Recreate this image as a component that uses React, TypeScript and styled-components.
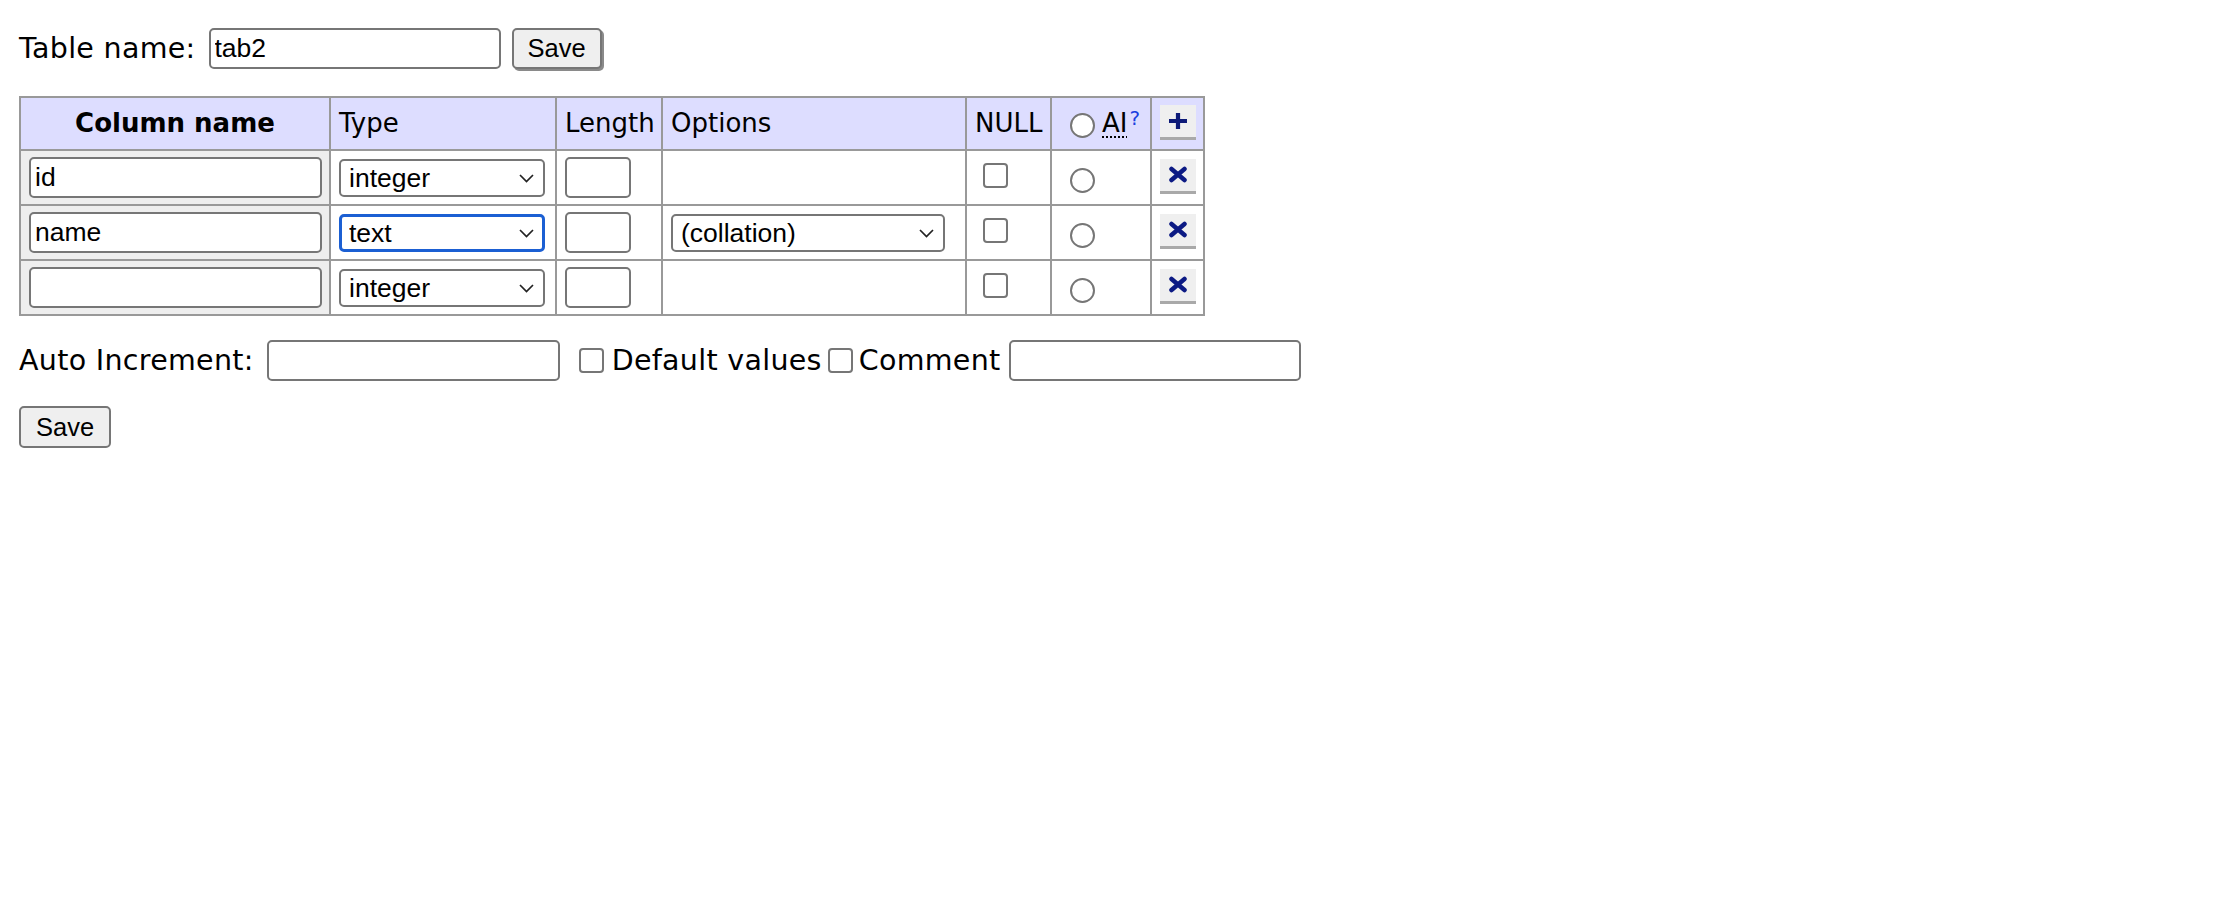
import React from "react";
import styled, { createGlobalStyle, css } from "styled-components";

const Global = createGlobalStyle`
  html, body { margin: 0; padding: 0; background: #fff; }
  body { font-family: "DejaVu Sans", Verdana, sans-serif; font-size: 28px; color: #000; }
`;

const Page = styled.div`
  padding: 27px 20px 0 19px;
  font-family: "DejaVu Sans", Verdana, sans-serif;
  font-size: 28.5px;
  letter-spacing: 0.3px;
  line-height: 1.25;
`;

const Line = styled.div`
  display: flex;
  align-items: center;
  height: ${(p: { $h: number }) => p.$h}px;
`;

const Label = styled.span<{ $ml?: number }>`
  margin-left: ${(p) => p.$ml ?? 0}px;
  white-space: nowrap;
`;

const TextInput = styled.input<{ $w: number; $ml?: number }>`
  box-sizing: border-box;
  width: ${(p) => p.$w}px;
  height: 41px;
  margin-left: ${(p) => p.$ml ?? 0}px;
  border: 2px solid #767676;
  border-radius: 5px;
  padding: 0 4px;
  font-family: "Liberation Sans", Arial, sans-serif;
  font-size: 26.5px;
  letter-spacing: 0;
  color: #000;
  background: #fff;
  outline: none;
`;

const Button = styled.button<{ $raised?: boolean; $ml?: number }>`
  box-sizing: border-box;
  height: 42px;
  width: 92px;
  margin-left: ${(p) => p.$ml ?? 0}px;
  border: 2px solid #767676;
  border-radius: 5px;
  background: #efefef;
  font-family: "Liberation Sans", Arial, sans-serif;
  font-size: 25.5px;
  letter-spacing: 0;
  color: #000;
  padding: 0;
  ${(p) =>
    p.$raised &&
    css`
      height: 41px;
      width: 90px;
      box-shadow: 2px 2px 0 #8a8a8a;
    `}
`;

const Table = styled.table`
  margin-top: 26px;
  border-collapse: collapse;
  table-layout: fixed;
  width: 1184px;
  border: 2px solid #999;
  font-size: 26px;
  letter-spacing: 0;
`;

const Col = styled.col<{ $w: number }>`
  width: ${(p) => p.$w}px;
`;

const cellBase = css`
  border: 2px solid #999;
  padding: 0 8px;
  vertical-align: middle;
  text-align: left;
  white-space: nowrap;
`;

const HeadCell = styled.td<{ $bold?: boolean; $center?: boolean }>`
  ${cellBase};
  height: 51px;
  background: #ddf;
  font-weight: ${(p) => (p.$bold ? "bold" : "normal")};
  text-align: ${(p) => (p.$center ? "center" : "left")};
`;

const BodyCell = styled.td<{ $grey?: boolean }>`
  ${cellBase};
  height: 53px;
  background: ${(p) => (p.$grey ? "#eee" : "#fff")};
`;

const SelectWrap = styled.span<{ $w: number }>`
  position: relative;
  display: inline-block;
  width: ${(p) => p.$w}px;
  height: 38px;
  vertical-align: middle;
`;

const Select = styled.select<{ $focused?: boolean }>`
  appearance: none;
  -webkit-appearance: none;
  box-sizing: border-box;
  width: 100%;
  height: 100%;
  border: 2px solid #767676;
  border-radius: 5px;
  background: #fff;
  padding: 0 30px 0 8px;
  font-family: "Liberation Sans", Arial, sans-serif;
  font-size: 26.5px;
  color: #000;
  outline: none;
  ${(p) =>
    p.$focused &&
    css`
      border: 3px solid #1b5fd3;
      padding-left: 7px;
    `}
`;

const Chevron = styled.svg`
  position: absolute;
  right: 11px;
  top: 50%;
  margin-top: -4px;
  pointer-events: none;
`;

const Check = styled.input`
  appearance: none;
  -webkit-appearance: none;
  box-sizing: border-box;
  width: 25px;
  height: 25px;
  margin: 0 0 6px 8px;
  border: 2px solid #767676;
  border-radius: 4px;
  background: #fff;
  vertical-align: middle;
`;

const InlineCheck = styled(Check)<{ $ml: number }>`
  margin: 0 0 0 ${(p) => p.$ml}px;
`;

const Radio = styled.input`
  appearance: none;
  -webkit-appearance: none;
  box-sizing: border-box;
  width: 25px;
  height: 25px;
  margin: 2px 0 -2px 10px;
  border: 2px solid #767676;
  border-radius: 50%;
  background: #fff;
  vertical-align: middle;
`;

const HeadRadio = styled(Radio)`
  margin: 0 0 0 10px;
  vertical-align: -6px;
`;

const Abbr = styled.abbr`
  margin-left: 7px;
  text-decoration: underline dotted;
  text-underline-offset: 4px;
  text-decoration-thickness: 2px;
  cursor: help;
`;

const Sup = styled.sup`
  font-size: 20px;
  vertical-align: top;
  position: relative;
  top: 1px;
  margin-left: 2px;
  line-height: 1;
  a {
    color: #1a3fe0;
    text-decoration: none;
  }
`;

const IconButton = styled.button`
  box-sizing: border-box;
  width: 36px;
  height: 35px;
  padding: 0;
  margin-bottom: 3px;
  border: none;
  border-bottom: 3px solid #a9a9a9;
  background: #efefef;
  display: flex;
  align-items: center;
  justify-content: center;
`;

const PlusIcon = () => (
  <svg width="22" height="20" viewBox="0 0 22 20">
    <path d="M11 2 V18 M2 10 H20" stroke="#0d1a78" strokeWidth="4.2" />
  </svg>
);

const CrossIcon = () => (
  <svg width="20" height="17" viewBox="0 0 20 17">
    <path d="M3.5 3 L16.5 14 M16.5 3 L3.5 14" stroke="#0c1a84" strokeWidth="4.5" strokeLinecap="round" />
  </svg>
);

const ChevronIcon = () => (
  <Chevron width="15" height="9" viewBox="0 0 15 9">
    <path d="M1 1 L7.5 7.5 L14 1" stroke="#222" strokeWidth="1.7" fill="none" />
  </Chevron>
);

type Row = { name: string; type: string; focused?: boolean; collation?: boolean };

const rows: Row[] = [
  { name: "id", type: "integer" },
  { name: "name", type: "text", focused: true, collation: true },
  { name: "", type: "integer" },
];

const widths = [310, 226, 106, 304, 85, 100, 53];

export default function App() {
  return (
    <>
      <Global />
      <Page>
        <Line $h={43}>
          <Label>Table name:</Label>
          <TextInput $w={292} $ml={13} defaultValue="tab2" />
          <Button $raised $ml={11}>Save</Button>
        </Line>
        <Table>
          <colgroup>
            {widths.map((w, i) => (
              <Col key={i} $w={w} />
            ))}
          </colgroup>
          <thead>
            <tr>
              <HeadCell as="th" $bold $center>Column name</HeadCell>
              <HeadCell>Type</HeadCell>
              <HeadCell>Length</HeadCell>
              <HeadCell>Options</HeadCell>
              <HeadCell>NULL</HeadCell>
              <HeadCell>
                <HeadRadio type="radio" name="auto_increment_col" />
                <Abbr title="Auto Increment">AI</Abbr>
                <Sup>
                  <a href="#">?</a>
                </Sup>
              </HeadCell>
              <HeadCell>
                <IconButton title="Add next">
                  <PlusIcon />
                </IconButton>
              </HeadCell>
            </tr>
          </thead>
          <tbody>
            {rows.map((r, i) => (
              <tr key={i}>
                <BodyCell as="th" $grey>
                  <TextInput $w={293} defaultValue={r.name} />
                </BodyCell>
                <BodyCell>
                  <SelectWrap $w={206}>
                    <Select $focused={r.focused} defaultValue={r.type}>
                      <option>integer</option>
                      <option>text</option>
                    </Select>
                    <ChevronIcon />
                  </SelectWrap>
                </BodyCell>
                <BodyCell>
                  <TextInput $w={66} />
                </BodyCell>
                <BodyCell>
                  {r.collation && (
                    <SelectWrap $w={274}>
                      <Select defaultValue="(collation)">
                        <option>(collation)</option>
                      </Select>
                      <ChevronIcon />
                    </SelectWrap>
                  )}
                </BodyCell>
                <BodyCell>
                  <Check type="checkbox" />
                </BodyCell>
                <BodyCell>
                  <Radio type="radio" name="auto_increment_col" />
                </BodyCell>
                <BodyCell>
                  <IconButton title="Remove">
                    <CrossIcon />
                  </IconButton>
                </BodyCell>
              </tr>
            ))}
          </tbody>
        </Table>
        <Line $h={41} style={{ marginTop: 24 }}>
          <Label>Auto Increment:</Label>
          <TextInput $w={293} $ml={13} />
          <InlineCheck type="checkbox" $ml={19} />
          <Label $ml={8}>Default values</Label>
          <InlineCheck type="checkbox" $ml={6} />
          <Label $ml={6}>Comment</Label>
          <TextInput $w={292} $ml={9} />
        </Line>
        <Line $h={42} style={{ marginTop: 25 }}>
          <Button>Save</Button>
        </Line>
      </Page>
    </>
  );
}
